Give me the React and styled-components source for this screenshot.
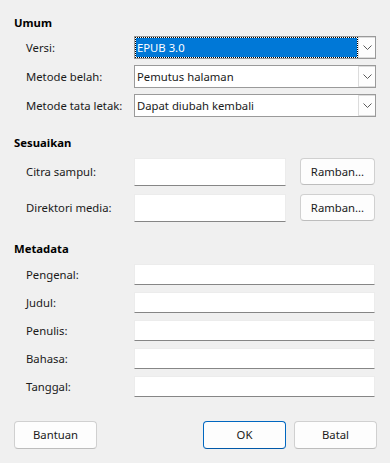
import React from "react";
import styled, { createGlobalStyle } from "styled-components";

const Global = createGlobalStyle`
  html, body { margin: 0; padding: 0; background: #f0f0f0; }
  body {
    font-family: "Segoe UI", "Noto Sans", "Open Sans", sans-serif;
    font-size: 11.3px;
    color: #1a1a1a;
  }
  * { box-sizing: border-box; }
`;

const Dialog = styled.div`
  width: 390px;
  height: 463px;
  padding: 15px 14px 14px 14px;
  display: flex;
  flex-direction: column;
`;

const Heading = styled.div`
  font-weight: 700;
  color: #000;
  line-height: 16px;
  height: 16px;
  margin-top: ${(p) => p.$mt || 0}px;
`;

const Rows = styled.div`
  display: grid;
  grid-template-columns: 108px 1fr;
  row-gap: ${(p) => p.$gap}px;
  margin-top: ${(p) => p.$mt}px;
  padding-left: 12px;
  align-items: center;
`;

const Label = styled.div`
  line-height: 16px;
  white-space: nowrap;
`;

const Combo = styled.div`
  height: 23px;
  width: 242px;
  border: 1px solid #9a9a9a;
  background: #fff;
  display: flex;
`;

const ComboValue = styled.div`
  flex: 1;
  display: flex;
  align-items: center;
  padding-left: 1px;
  border: 1px ${(p) => (p.$selected ? "dotted #000" : "solid transparent")};
  background: ${(p) => (p.$selected ? "#0078d7" : "transparent")};
  background-clip: padding-box;
  color: ${(p) => (p.$selected ? "#fff" : "#1a1a1a")};
  white-space: nowrap;
  overflow: hidden;
`;

const ComboButton = styled.div`
  width: 17px;
  border: 1px solid #dcdcdc;
  border-right: none;
  background: #fdfdfd;
  display: flex;
  align-items: center;
  justify-content: center;
`;

const FieldWithButton = styled.div`
  display: flex;
  align-items: flex-start;
  gap: 14px;
`;

const TextBox = styled.div`
  height: ${(p) => p.$h}px;
  width: ${(p) => (p.$w ? `${p.$w}px` : "241px")};
  background: #fff;
  border: 1px solid #ececec;
  border-bottom: 1px solid #868686;
`;

const Button = styled.button`
  font: inherit;
  color: #1a1a1a;
  width: ${(p) => p.$w}px;
  height: ${(p) => p.$h}px;
  background: #fdfdfd;
  border: 1px solid ${(p) => (p.$primary ? "#0067c0" : "#d0d0d0")};
  border-bottom-color: ${(p) => (p.$primary ? "#0058a8" : "#bdbdbd")};
  border-radius: 4px;
  padding: 0;
  line-height: 16px;
  display: flex;
  align-items: center;
  justify-content: center;
`;

const Footer = styled.div`
  margin-top: 24px;
  display: flex;
  justify-content: space-between;
`;

const ButtonGroup = styled.div`
  display: flex;
  gap: 8px;
  margin-right: -1px;
`;

const Chevron = () => (
  <svg width="9" height="5" viewBox="0 0 9 5">
    <polyline points="0.5,0.5 4.5,4.5 8.5,0.5" fill="none" stroke="#5a5a5a" strokeWidth="1" />
  </svg>
);

const ComboBox = ({ value, selected }) => (
  <Combo>
    <ComboValue $selected={selected}>{value}</ComboValue>
    <ComboButton>
      <Chevron />
    </ComboButton>
  </Combo>
);

export default function App() {
  return (
    <>
      <Global />
      <Dialog>
        <Heading>Umum</Heading>
        <Rows $gap={6} $mt={5}>
          <Label>Versi:</Label>
          <ComboBox value="EPUB 3.0" selected />
          <Label>Metode belah:</Label>
          <ComboBox value="Pemutus halaman" />
          <Label>Metode tata letak:</Label>
          <ComboBox value="Dapat diubah kembali" />
        </Rows>

        <Heading $mt={18}>Sesuaikan</Heading>
        <Rows $gap={8} $mt={7}>
          <Label>Citra sampul:</Label>
          <FieldWithButton>
            <TextBox $h={28} $w={152} />
            <Button $w={75} $h={27}>Ramban...</Button>
          </FieldWithButton>
          <Label>Direktori media:</Label>
          <FieldWithButton>
            <TextBox $h={28} $w={152} />
            <Button $w={75} $h={27}>Ramban...</Button>
          </FieldWithButton>
        </Rows>

        <Heading $mt={19}>Metadata</Heading>
        <Rows $gap={7} $mt={7}>
          <Label>Pengenal:</Label>
          <TextBox $h={21} />
          <Label>Judul:</Label>
          <TextBox $h={21} />
          <Label>Penulis:</Label>
          <TextBox $h={21} />
          <Label>Bahasa:</Label>
          <TextBox $h={21} />
          <Label>Tanggal:</Label>
          <TextBox $h={21} />
        </Rows>

        <Footer>
          <Button $w={83} $h={28}>Bantuan</Button>
          <ButtonGroup>
            <Button $w={83} $h={28} $primary>OK</Button>
            <Button $w={83} $h={28}>Batal</Button>
          </ButtonGroup>
        </Footer>
      </Dialog>
    </>
  );
}
